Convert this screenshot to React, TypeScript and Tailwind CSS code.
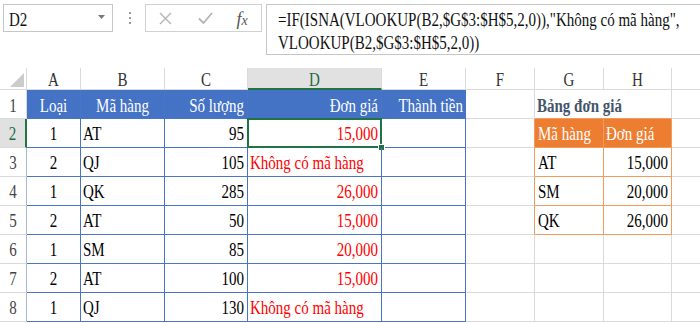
import React from "react";

const BLUE_B = "border-r border-b border-[#4a74c4]";
const GRAY_B = "border-r border-b border-[#dadada]";
const ORANGE_B = "border-r border-b border-[#f19c5d]";

function T({ children, className = "" }: { children?: React.ReactNode; className?: string }) {
  return (
    <span className={"inline-block scale-y-130 leading-none whitespace-nowrap [font-family:'Liberation_Serif','Times_New_Roman',serif] " + className}>
      {children}
    </span>
  );
}

type Row = { n: number; a: string; b: string; c: string; d: string; g?: string; h?: string };

const rows: Row[] = [
  { n: 2, a: "1", b: "AT", c: "95", d: "15,000", g: "Mã hàng", h: "Đơn giá" },
  { n: 3, a: "2", b: "QJ", c: "105", d: "Không có mã hàng", g: "AT", h: "15,000" },
  { n: 4, a: "1", b: "QK", c: "285", d: "26,000", g: "SM", h: "20,000" },
  { n: 5, a: "2", b: "AT", c: "50", d: "15,000", g: "QK", h: "26,000" },
  { n: 6, a: "1", b: "SM", c: "85", d: "20,000" },
  { n: 7, a: "2", b: "AT", c: "100", d: "15,000" },
  { n: 8, a: "1", b: "QJ", c: "130", d: "Không có mã hàng" },
];

function FormulaBar() {
  return (
    <div className="h-[68px] flex items-start pt-[4px] text-[15px] text-[#111]">
      <div className="ml-[3px] w-[110px] h-[28px] border border-[#c6c6c6] flex items-center justify-between pl-[5px] pr-[7px] pt-[4px]">
        <T>D2</T>
        <svg width="7" height="4" viewBox="0 0 7 4" className="-mt-[6px]">
          <polygon points="0,0 7,0 3.5,4" fill="#7a7a7a" />
        </svg>
      </div>
      <div className="w-[32px] h-[28px] flex flex-col items-center justify-center gap-[3px] pl-[1px]">
        <div className="w-[2px] h-[2px] bg-[#999]" />
        <div className="w-[2px] h-[2px] bg-[#999]" />
        <div className="w-[2px] h-[2px] bg-[#999]" />
      </div>
      <div className="w-[117px] h-[28px] border border-[#d0d0d0] flex items-center">
        <div className="w-[39px] flex justify-center">
          <svg width="13" height="13" viewBox="0 0 13 13">
            <path d="M1 1 L12 12 M12 1 L1 12" stroke="#b4b4b4" strokeWidth="1.4" fill="none" />
          </svg>
        </div>
        <div className="w-[40px] flex justify-center">
          <svg width="15" height="12" viewBox="0 0 15 12">
            <path d="M1 6.5 L5.5 11 L14 1" stroke="#b4b4b4" strokeWidth="1.8" fill="none" />
          </svg>
        </div>
        <div className="w-[34px] flex justify-center pt-[1px]">
          <span className="italic text-[18px] text-[#555] leading-none [font-family:'Liberation_Serif','Times_New_Roman',serif]">
            f<span className="text-[14px]">x</span>
          </span>
        </div>
      </div>
      <div className="ml-[4px] flex-1 h-[51px] border-l border-t border-b border-[#c6c6c6] pl-[11px] pt-[4px]">
        <div className="h-[23px] flex items-center">
          <T>=IF(ISNA(VLOOKUP(B2,$G$3:$H$5,2,0)),"Không có mã hàng",</T>
        </div>
        <div className="h-[23px] flex items-center">
          <T>VLOOKUP(B2,$G$3:$H$5,2,0))</T>
        </div>
      </div>
    </div>
  );
}

function Sheet() {
  const cell = "flex items-center pt-[3px] min-w-0 overflow-visible";
  const hdr = "flex items-center justify-center pt-[4px] text-[#333] " + GRAY_B;
  const rowHdr = "flex items-center justify-center pt-[3px] text-[#444] border-r border-b border-[#dadada] border-r-[#a9b8d6]";
  return (
    <div className="grid grid-cols-[27px_54px_84px_83px_134px_84px_69px_69px_68px_28px] grid-rows-[22px_repeat(8,29px)] text-[15px]">
      {/* header row */}
      <div className={"flex items-end justify-end pr-[2px] pb-[2px] " + GRAY_B}>
        <svg width="14" height="14" viewBox="0 0 14 14">
          <polygon points="14,0 14,14 0,14" fill="#cccccc" />
        </svg>
      </div>
      <div className={hdr}><T>A</T></div>
      <div className={hdr}><T>B</T></div>
      <div className={hdr}><T>C</T></div>
      <div className="flex items-center justify-center pt-[4px] text-[#1e6b41] bg-[#e1e1e1] border-r border-[#dadada] border-b-2 border-b-[#217346]"><T>D</T></div>
      <div className={hdr}><T>E</T></div>
      <div className={hdr}><T>F</T></div>
      <div className={hdr}><T>G</T></div>
      <div className={hdr}><T>H</T></div>
      <div className="border-b border-[#dadada]" />

      {/* row 1 */}
      <div className={"flex items-center justify-center pt-[5px] text-[#444] border-r border-b border-[#dadada]"}><T>1</T></div>
      <div className={"flex items-center justify-center pt-[5px] bg-[#4472c4] text-white " + BLUE_B}><T>Loại</T></div>
      <div className={"flex items-center justify-center pt-[5px] bg-[#4472c4] text-white " + BLUE_B}><T>Mã hàng</T></div>
      <div className={"flex items-center justify-end pr-[3px] pt-[5px] bg-[#4472c4] text-white " + BLUE_B}><T>Số lượng</T></div>
      <div className={"flex items-center justify-end pr-[3px] pt-[5px] bg-[#4472c4] text-white " + BLUE_B}><T>Đơn giá</T></div>
      <div className={"flex items-center justify-end pr-[2px] pt-[5px] bg-[#4472c4] text-white " + BLUE_B}><T>Thành tiền</T></div>
      <div className={GRAY_B} />
      <div className="flex items-center pl-[2px] pt-[5px] overflow-visible border-b border-[#f19c5d]">
        <T className="font-bold text-[#44546a]">Bảng đơn giá</T>
      </div>
      <div className="border-r border-b border-[#dadada] border-b-[#f19c5d]" />
      <div className="border-b border-[#dadada]" />

      {rows.map((r) => {
        const sel = r.n === 2;
        const hasOrange = !!r.g;
        const isHead = r.n === 2;
        const isText = r.d.startsWith("K");
        return (
          <React.Fragment key={r.n}>
            {sel ? (
              <div className="flex items-center justify-center pt-[3px] text-[#1e6b41] bg-[#e1e1e1] border-b border-[#dadada] border-r-2 border-r-[#217346]"><T>{r.n}</T></div>
            ) : (
              <div className={rowHdr}><T>{r.n}</T></div>
            )}
            <div className={cell + " justify-center " + BLUE_B}><T>{r.a}</T></div>
            <div className={cell + " pl-[2px] " + BLUE_B}><T>{r.b}</T></div>
            <div className={cell + " justify-end pr-[3px] " + BLUE_B}><T>{r.c}</T></div>
            <div className={cell + " relative text-[#ff0000] " + (isText ? "pl-[2px] " : "justify-end pr-[3px] ") + BLUE_B}>
              <T>{r.d}</T>
              {sel && (
                <>
                  <div className="absolute -left-[1px] -top-[1px] -right-[1px] -bottom-[1px] border-2 border-[#217346]" />
                  <div className="absolute -right-[4px] -bottom-[4px] w-[7px] h-[7px] bg-[#217346] border border-white" />
                </>
              )}
            </div>
            <div className={BLUE_B} />
            <div className={hasOrange ? "border-r border-b border-[#dadada] border-r-[#f19c5d]" : GRAY_B} />
            {hasOrange ? (
              isHead ? (
                <>
                  <div className={cell + " pl-[3px] bg-[#ed7d31] text-white " + ORANGE_B}><T>{r.g}</T></div>
                  <div className={cell + " pl-[2px] bg-[#ed7d31] text-white " + ORANGE_B}><T>{r.h}</T></div>
                </>
              ) : (
                <>
                  <div className={cell + " pl-[3px] " + ORANGE_B}><T>{r.g}</T></div>
                  <div className={cell + " justify-end pr-[3px] " + ORANGE_B}><T>{r.h}</T></div>
                </>
              )
            ) : (
              <>
                <div className={GRAY_B} />
                <div className={GRAY_B} />
              </>
            )}
            <div className="border-b border-[#dadada]" />
          </React.Fragment>
        );
      })}
    </div>
  );
}

export default function App() {
  return (
    <div className="w-[700px] h-[323px] bg-white overflow-hidden [font-family:'Liberation_Serif','Times_New_Roman',serif] text-black">
      <FormulaBar />
      <Sheet />
    </div>
  );
}
